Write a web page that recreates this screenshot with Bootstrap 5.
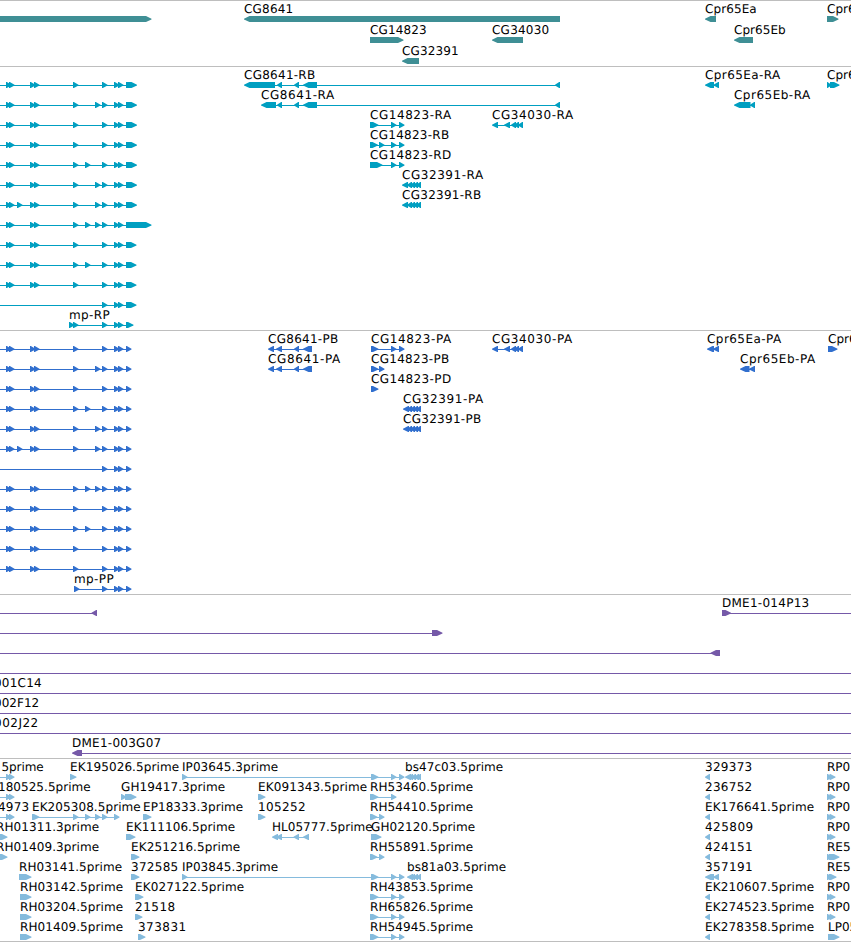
<!DOCTYPE html>
<html lang="en">
<head>
<meta charset="utf-8">
<title>Genome browser tracks</title>
<link href="https://cdn.jsdelivr.net/npm/bootstrap@5.3.0/dist/css/bootstrap.min.css" rel="stylesheet">
<style>
  .browser-view { width: 851px; height: 942px; }
  .track { border-top: 1px solid #bebebe; padding-bottom: 3px; }
  .track-gene { color: #3f8f95; padding-bottom: 2px; }
  .track-mrna { color: #009fc1; }
  .track-cds { color: #316fce; }
  .track-bac { color: #7559a8; }
  .track-est { color: #85bbdd; padding-bottom: 2px; border-bottom: 1px solid #bebebe; }
  .lane { height: 20px; width: 851px; overflow: visible; }
  .track-gene .lane { height: 21px; }
  .lane polygon, .lane rect { fill: currentColor; }
  .lane text { fill: #000; font: 12px "DejaVu Sans", sans-serif; white-space: pre; text-rendering: geometricPrecision; }
</style>
<script src="https://cdn.jsdelivr.net/npm/bootstrap@5.3.0/dist/js/bootstrap.bundle.min.js"></script>
</head>
<body class="bg-white m-0 overflow-hidden">
<main class="browser-view d-flex flex-column overflow-hidden" id="view"></main>
<script>
// Feature: [strand, blocks, label, labelStart, labelEnd, lineStart, lineEnd]
const A = [[6,11.5],[9,14.5]], B = [[30,35.5],[34,39.5]], C = [[73,78.5]],
      D = [[102,107.5],[114,119.5],[118,123.5]];
const e85 = [85,90.5], e95 = [95,100.5], e17 = [17,22.5];
const mp = (extra, end) => ['>', [...A, ...B, ...C, ...extra, ...D, [126,end]], '', 0, 0, 0, 126];
const shortMp = end => ['>', [...D, [126,end]], '', 0, 0, 0, 126];
const tight = s => [[s,s+6],[407,412],[410,415],[413,418],[416,421]];
const cg34 = [[492,498],[504,510],[511,516],[514,519],[518,523]];
const rh = (name, ex) => ['>', ex, name, 370, 473.5];
const three = [[370,378.5],[391,396.5],[399,404.5]];
const leftEst = (name, end) => ['<', [[705,710]], name, 705, end];
const rightEst = (name, ex) => ['>', ex || [[827,832],[829.5,835.5]], name, 827, 0];
const ip = name => ['>', [[182,187.5],[371,378.5],[391,396.5],[399,404.5]], name, 182, 278.5];
const full = (name, end) => ['>', [], name, -6, end, 0, 851];

const tracks = [
  ['gene', [
    [['>', [[-9,151.5]]], ['<', [[244,560]], 'CG8641', 244, 293.5], ['<', [[705,716]], 'Cpr65Ea', 705, 757], ['>', [[827,838.5]], 'Cpr6', 827, 0]],
    [['>', [[370,403.5]], 'CG14823', 370, 427], ['<', [[492,523]], 'CG34030', 492, 549.5], ['<', [[734,753]], 'Cpr65Eb', 734, 786]],
    [['<', [[402,419]], 'CG32391', 402, 459]]
  ]],
  ['mrna', [
    [mp([],137), ['<', [[244,275],[277,282],[294,299],[303,317],[555,560]], 'CG8641-RB', 244, 315.5], ['<', [[705,714],[713.5,719]], 'Cpr65Ea-RA', 705, 780.5], ['>', [[827,831.5],[830,839.5]], 'Cpr6', 827, 0]],
    [mp([e95],137), ['<', [[261,276],[277,282],[294,299],[303,317],[555,560]], 'CG8641-RA', 261, 334.5], ['<', [[734,750.5],[750,755]], 'Cpr65Eb-RA', 734, 810.5]],
    [mp([],137), ['>', three, 'CG14823-RA', 370, 451.5], ['<', cg34, 'CG34030-RA', 492, 573.5]],
    [mp([],137), ['>', [[370,378],[379,384.5],[391,396.5],[399,404.5]], 'CG14823-RB', 370, 449.5]],
    [mp([e85],137), ['>', [[370,382.5],[391,396.5],[399,404.5]], 'CG14823-RD', 370, 451.5]],
    [mp([e95],137), ['<', tight(402), 'CG32391-RA', 402, 483.5]],
    [mp([e17,e95],137), ['<', tight(402), 'CG32391-RB', 402, 481.5]],
    [mp([e85,e95],151.5)],
    [mp([],136.5)],
    [mp([e85],136.5)],
    [mp([],136.5)],
    [shortMp(136.5)],
    [['>', [[69,74.5],[73,78.5],...D,[126,133.5]], 'mp-RP', 69, 110]]
  ]],
  ['cds', [
    [mp([],131.5), ['<', [[268,274],[276,282],[294,299],[303,312]], 'CG8641-PB', 268, 338.5], ['>', [[371,378.5],[391,396.5],[399,404.5]], 'CG14823-PA', 371, 451.5], ['<', cg34, 'CG34030-PA', 492, 572.5], ['<', [[707,714],[713,719]], 'Cpr65Ea-PA', 707, 781.5], ['>', [[828,837.5]], 'Cpr6', 828, 0]],
    [mp([e95],131.5), ['<', [[268,274],[276,282],[294,299],[303,312]], 'CG8641-PA', 268, 340.5], ['>', [[371,378.5],[379,384.5]], 'CG14823-PB', 371, 449.5], ['<', [[740,749.5],[749,755]], 'Cpr65Eb-PA', 740, 815.5]],
    [mp([],131.5), ['>', [[371,378.5]], 'CG14823-PD', 371, 451.5]],
    [mp([e85],131.5), ['<', tight(403), 'CG32391-PA', 403, 483.5]],
    [mp([e95],131.5), ['<', tight(403), 'CG32391-PB', 403, 481.5]],
    [mp([e17,e95],131.5)],
    [shortMp(131.5)],
    [mp([e85,e95],131.5)],
    [mp([],131.5)],
    [mp([e85],131.5)],
    [mp([],131.5)],
    [mp([],131.5)],
    [['>', [[74,79.5],...D,[126,131.5]], 'mp-PP', 74, 114]]
  ]],
  ['bac', [
    [['<', [[91.5,97]], '', 0, 0, 0, 97], ['>', [[722,731]], 'DME1-014P13', 722, 809.5, 722, 851]],
    [['>', [[432,442.5]], '', 0, 0, 0, 437]],
    [['<', [[710.5,720]], '', 0, 0, 0, 720]],
    [full('', 0)],
    [full('001C14', 42)],
    [full('002F12', 39.5)],
    [full('002J22', 38.5)],
    [['<', [[72,82]], 'DME1-003G07', 72, 161.5, 76, 851]]
  ]],
  ['est', [
    [['>', A, '5prime', 1.5, 44, 0, 10], ['>', [[70,76.5]], 'EK195026.5prime', 70, 179.5], ip('IP03645.3prime'), ['<', [[405,411],[408,413],[411,416],[414,419],[416,421]], 'bs47c03.5prime', 405, 503.5], leftEst('329373', 752.5), rightEst('RP0')],
    [['>', A, '180525.5prime', -2, 91, 0, 10], ['>', [[121,126.5],[125,136.5]], 'GH19417.3prime', 121, 225.5], ['>', [[258,265.5]], 'EK091343.5prime', 258, 367.5], rh('RH53460.5prime', [[370,378.5],[391,396.5]]), leftEst('236752', 752.5), rightEst('RP0')],
    [['>', A, '4973', -2, 29.5, 0, 10], ['>', [[32,39.5],[73,78.5],e85,e95,[102,107.5],[114,119.5]], 'EK205308.5prime', 32, 141], ['>', [[143,151.5]], 'EP18333.3prime', 143, 243.5], ['>', [[258,265.5]], '105252', 258, 306], rh('RH54410.5prime', [[370,377.5],[379,384.5]]), leftEst('EK176641.5prime', 814.5), rightEst('RP0')],
    [['>', [[-4,7.5]], 'RH01311.3prime', -4, 99.5], ['>', [[126,135.5]], 'EK111106.5prime', 126, 235.5], ['<', [[272,278],[276,282],[293.5,299],[303,309]], 'HL05777.5prime', 272, 373], ['>', [[371,381.5]], 'GH02120.5prime', 371, 475.5], leftEst('425809', 753.5), rightEst('RP0')],
    [['>', [[-4,7.5]], 'RH01409.3prime', -4, 99.5], ['>', [[131,139.5]], 'EK251216.5prime', 131, 240.5], rh('RH55891.5prime', [[370,377.5],[379,384.5]]), leftEst('424151', 753), rightEst('RE5', [[827,832],[829,839.5]])],
    [['>', [[19,31.5]], 'RH03141.5prime', 19, 122.5], ['>', [[131,139.5]], '372585', 131, 178.5], ip('IP03845.3prime'), ['<', tight(407).slice(0,1).concat([[410,415],[413,418],[416,421]]), 'bs81a03.5prime', 407, 506.5], ['<', [[705,714],[713,719]], '357191', 705, 753], rightEst('RE5', [[827,832],[829,836.5]])],
    [['>', [[20,31.5]], 'RH03142.5prime', 20, 123.5], ['>', [[135,143.5]], 'EK027122.5prime', 135, 244.5], rh('RH43853.5prime', three), leftEst('EK210607.5prime', 814.5), rightEst('RP0')],
    [['>', [[20,31.5]], 'RH03204.5prime', 20, 123.5], ['>', [[135,142.5]], '21518', 135, 175.5], rh('RH65826.5prime', three), leftEst('EK274523.5prime', 814.5), rightEst('RP0')],
    [['>', [[20,31.5]], 'RH01409.5prime', 20, 123.5], ['>', [[138,145.5]], '373831', 138, 186.5], rh('RH54945.5prime', three), leftEst('EK278358.5prime', 814.5), ['>', [[828,839.5]], 'LP05', 828, 0]]
  ]]
];

// A block is a bar 6px high whose downstream end tapers to a point.
function block(strand, [a, b]) {
  const head = Math.min(5.5, Math.max(b - a - 0.8, 4));
  return strand === '>'
    ? `<polygon points="${a},15 ${b-head},15 ${b},17.7 ${b},18.5 ${b-head},21 ${a},21"/>`
    : `<polygon points="${b},15 ${a+head},15 ${a},17.7 ${a},18.5 ${a+head},21 ${b},21"/>`;
}
function feature([strand, blocks, label, x, end, l0, l1]) {
  let s = '';
  if (l0 === undefined && blocks.length > 1) { l0 = blocks[0][0] + 1; l1 = blocks[blocks.length-1][1] - 1; }
  if (l0 !== undefined) s += `<rect x="${l0}" y="18" width="${l1-l0}" height="1"/>`;
  s += blocks.map(b => block(strand, b)).join('');
  if (label) s += `<text x="${x}" y="12"${end ? ` textLength="${end-x-0.3}"` : ''}>${label}</text>`;
  return s;
}
document.getElementById('view').innerHTML = tracks.map(([kind, lanes]) =>
  `<section class="track track-${kind} d-flex flex-column flex-shrink-0">` +
  lanes.map(f => `<svg class="lane d-block flex-shrink-0">${f.map(feature).join('')}</svg>`).join('') +
  '</section>').join('');
</script>
</body>
</html>
